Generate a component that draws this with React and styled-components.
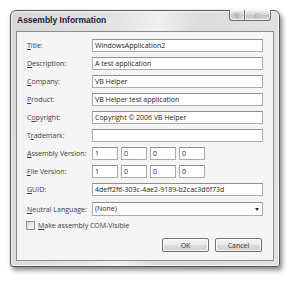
import React from 'react'
import styled, { createGlobalStyle } from 'styled-components'

const GlobalStyle = createGlobalStyle`
    html, body {
        margin: 0;
        background: #ffffff;
    }
    body {
        font-family: "Open Sans", "DejaVu Sans", sans-serif;
        font-size: 7px;
        color: #333;
    }
`

const Desktop = styled.div`
    padding: 10px 0 0 10px;
    width: 292px;
    height: 281px;
    box-sizing: border-box;
`

const Window = styled.div`
    width: 270px;
    height: 257px;
    box-sizing: border-box;
    border: 1px solid #555;
    border-radius: 6px 6px 3px 3px;
    background: linear-gradient(100deg, #d6d6d6 0%, #e4e4e4 35%, #f0f0f0 48%, #dcdcdc 60%, #e2e2e2 100%);
    box-shadow: 2px 3px 5px rgba(0, 0, 0, 0.5), inset 0 0 0 1px rgba(255, 255, 255, 0.7);
    display: flex;
    flex-direction: column;
    padding: 0 5px 5px 5px;
`

const TitleBar = styled.div`
    height: 20px;
    flex: none;
    display: flex;
    justify-content: space-between;
    align-items: flex-start;
`

const Caption = styled.div`
    padding: 4px 0 0 1px;
    font-family: "Liberation Sans", Arial, sans-serif;
    font-weight: bold;
    font-size: 8.5px;
    color: #1e1e1e;
`

const CaptionButtons = styled.div`
    display: flex;
    margin-top: -1px;
    margin-right: 3px;
`

const CaptionButton = styled.div`
    width: ${p => p.$w}px;
    height: 11px;
    box-sizing: border-box;
    border: 1px solid #6e6e6e;
    border-top: none;
    border-left-width: ${p => (p.$first ? 1 : 0)}px;
    border-radius: ${p => (p.$first ? '0 0 0 3px' : '0 0 3px 0')};
    background: linear-gradient(#f2f2f2, #d2d2d2 50%, #c4c4c4 51%, #d8d8d8);
    box-shadow: inset 0 0 0 1px rgba(255, 255, 255, 0.6);
    display: flex;
    align-items: center;
    justify-content: center;
    font-family: "Liberation Sans", Arial, sans-serif;
    font-weight: bold;
    font-size: 7px;
    color: #f8f8f8;
    text-shadow: 0 0 1px #555, 0 0 1px #555;
`

const Client = styled.div`
    flex: 1;
    background: #f5f5f5;
    border: 1px solid #8c8c8c;
    padding: 7px 10px 0 10px;
    display: flex;
    flex-direction: column;
`

const Form = styled.div`
    display: grid;
    grid-template-columns: 65px 1fr;
    row-gap: 5px;
    align-items: center;
`

const Label = styled.div`
    white-space: nowrap;
    color: #3a3a3a;
    line-height: 13px;
`

const Key = styled.span`
    text-decoration: underline;
    text-underline-offset: 1px;
`

const Field = styled.div`
    height: 13px;
    box-sizing: border-box;
    background: #fff;
    border: 1px solid #ababab;
    border-top-color: #8f8f8f;
    padding: 0 2px;
    line-height: 11px;
    color: #222;
    white-space: nowrap;
    overflow: hidden;
    width: ${p => (p.$w ? `${p.$w}px` : 'auto')};
`

const VersionRow = styled.div`
    display: flex;
    gap: 3px;
`

const ComboRow = styled.div`
    display: grid;
    grid-template-columns: 65px 1fr;
    align-items: center;
    margin-top: 6px;
`

const Combo = styled(Field)`
    height: 14px;
    line-height: 12px;
    display: flex;
    justify-content: space-between;
    align-items: center;
    padding-right: 3px;
`

const Arrow = styled.span`
    width: 0;
    height: 0;
    border-left: 2.5px solid transparent;
    border-right: 2.5px solid transparent;
    border-top: 3px solid #222;
`

const CheckRow = styled.div`
    display: flex;
    align-items: center;
    gap: 3px;
    margin-top: 5px;
    margin-left: -1px;
    color: #3a3a3a;
`

const CheckBox = styled.div`
    width: 9px;
    height: 9px;
    box-sizing: border-box;
    border: 1px solid #8e8e8e;
    background: linear-gradient(135deg, #dcdcdc, #fbfbfb);
`

const Buttons = styled.div`
    display: flex;
    justify-content: flex-end;
    gap: 6px;
    margin-top: 8px;
    margin-right: 1px;
`

const Button = styled.div`
    width: 47px;
    height: 14px;
    box-sizing: border-box;
    border: 1px solid #707070;
    border-radius: 2px;
    background: linear-gradient(#f4f4f4, #ebebeb 50%, #dcdcdc 51%, #d2d2d2);
    box-shadow: inset 0 0 0 1px rgba(255, 255, 255, 0.8);
    display: flex;
    align-items: center;
    justify-content: center;
    color: #333;
`

// label split as [before, access key, after]
const fields = [
    { label: ['', 'T', 'itle:'], value: 'WindowsApplication2' },
    { label: ['', 'D', 'escription:'], value: 'A test application' },
    { label: ['', 'C', 'ompany:'], value: 'VB Helper' },
    { label: ['', 'P', 'roduct:'], value: 'VB Helper test application' },
    { label: ['C', 'o', 'pyright:'], value: 'Copyright © 2006 VB Helper' },
    { label: ['T', 'r', 'ademark:'], value: '' },
]

const AccessLabel = ({ parts }) => (
    <Label>{parts[0]}<Key>{parts[1]}</Key>{parts[2]}</Label>
)

const version = ['1', '0', '0', '0']

const App = () => (
    <Desktop>
        <GlobalStyle />
        <Window>
            <TitleBar>
                <Caption>Assembly Information</Caption>
                <CaptionButtons>
                    <CaptionButton $w={16} $first>?</CaptionButton>
                    <CaptionButton $w={26}>x</CaptionButton>
                </CaptionButtons>
            </TitleBar>
            <Client>
                <Form>
                    {fields.map(f => (
                        <React.Fragment key={f.label.join('')}>
                            <AccessLabel parts={f.label} />
                            <Field>{f.value}</Field>
                        </React.Fragment>
                    ))}
                    <AccessLabel parts={['', 'A', 'ssembly Version:']} />
                    <VersionRow>
                        {version.map((v, i) => <Field key={i} $w={26}>{v}</Field>)}
                    </VersionRow>
                    <AccessLabel parts={['', 'F', 'ile Version:']} />
                    <VersionRow>
                        {version.map((v, i) => <Field key={i} $w={26}>{v}</Field>)}
                    </VersionRow>
                    <AccessLabel parts={['', 'G', 'UID:']} />
                    <Field>4deff2f6-303c-4ae2-9189-b2cac3d6f73d</Field>
                </Form>
                <ComboRow>
                    <AccessLabel parts={['', 'N', 'eutral Language:']} />
                    <Combo>(None)<Arrow /></Combo>
                </ComboRow>
                <CheckRow>
                    <CheckBox />
                    <span><Key>M</Key>ake assembly COM-Visible</span>
                </CheckRow>
                <Buttons>
                    <Button>OK</Button>
                    <Button>Cancel</Button>
                </Buttons>
            </Client>
        </Window>
    </Desktop>
)

export default App
